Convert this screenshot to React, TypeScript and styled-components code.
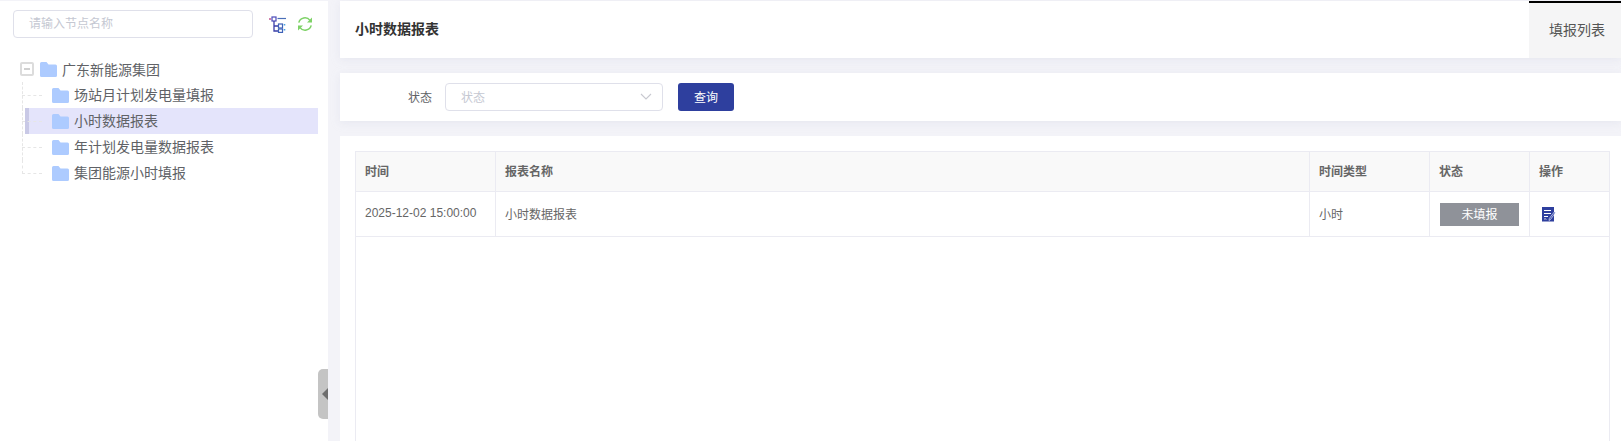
import styled, { createGlobalStyle } from "styled-components";

const GlobalStyle = createGlobalStyle`
  html, body {
    margin: 0;
    padding: 0;
    height: 100%;
    overflow: hidden;
    background: #f3f3f8;
  }
  * {
    box-sizing: border-box;
  }
  body {
    font-family: "Liberation Sans", "Noto Sans CJK SC", sans-serif;
  }
`;

const treeItems = ["场站月计划发电量填报", "小时数据报表", "年计划发电量数据报表", "集团能源小时填报"];

const FolderIcon = () => (
  <svg width="17" height="15" viewBox="0 0 17 15">
    <path d="M1.5 0h5l2 2.4h7a1.5 1.5 0 0 1 1.5 1.5v9.6a1.5 1.5 0 0 1-1.5 1.5h-14A1.5 1.5 0 0 1 0 13.500v-12A1.500 1.500 0 0 1 1.500 0z" fill="#adcbff" />
  </svg>
);

const App = () => {
  return (
    <>
      <GlobalStyle />
      <Page>
        <Sidebar>
          <SearchRow>
            <SearchInput>请输入节点名称</SearchInput>
            <IconButton>
              <svg width="18" height="17" viewBox="0 0 18 17" fill="none">
                <path d="M0 3h2" stroke="#c2568f" strokeWidth="1.4" />
                <rect x="3" y="1" width="4" height="4" stroke="#4a49b8" strokeWidth="1.2" />
                <path d="M8.5 2.500H17" stroke="#4a6fb8" strokeWidth="1.2" />
                <path d="M5 5v10h4M5 10h4" stroke="#3a3ea8" strokeWidth="1.3" />
                <rect x="9.500" y="8" width="4" height="4" stroke="#3f62b8" strokeWidth="1.2" />
                <rect x="9.500" y="13" width="4" height="3.400" stroke="#3f62b8" strokeWidth="1.2" />
                <path d="M15.500 8v1.500M15.500 13v1.500" stroke="#4aa3e0" strokeWidth="1.6" />
              </svg>
            </IconButton>
            <IconButton>
              <svg width="16" height="16" viewBox="0 0 16 16" fill="none">
                <path d="M1.800 6.600A6.300 6.300 0 0 1 13 4.400" stroke="#7ed267" strokeWidth="1.500" />
                <path d="M14.200 9.400A6.300 6.300 0 0 1 3 11.600" stroke="#7ed267" strokeWidth="1.500" />
                <path d="M15 1.400v5h-5z" fill="#7ed267" />
                <path d="M1 14.600v-5h5z" fill="#7ed267" />
              </svg>
            </IconButton>
          </SearchRow>
          <Tree>
            <RootRow>
              <Toggle />
              <FolderIcon />
              <NodeLabel>广东新能源集团</NodeLabel>
            </RootRow>
            <Branches>
              {treeItems.map((item, i) => (
                <TreeRow key={item} $active={i === 1} $last={i === treeItems.length - 1}>
                  <FolderIcon />
                  <BranchLabel>{item}</BranchLabel>
                </TreeRow>
              ))}
            </Branches>
          </Tree>
          <Collapse>
            <CollapseArrow />
          </Collapse>
        </Sidebar>
        <Main>
          <TitleBar>
            <Title>小时数据报表</Title>
            <Tab>填报列表</Tab>
          </TitleBar>
          <FilterBar>
            <FilterLabel>状态</FilterLabel>
            <Select>
              <span>状态</span>
              <svg width="12" height="7" viewBox="0 0 12 7" fill="none">
                <path d="M1 1l5 5 5-5" stroke="#c8c9d0" strokeWidth="1.1" />
              </svg>
            </Select>
            <QueryButton>查询</QueryButton>
          </FilterBar>
          <TableCard>
            <Table>
              <colgroup>
                <col style={{ width: 140 }} />
                <col />
                <col style={{ width: 120 }} />
                <col style={{ width: 100 }} />
                <col style={{ width: 80 }} />
              </colgroup>
              <thead>
                <tr>
                  <HeadCell>时间</HeadCell>
                  <HeadCell>报表名称</HeadCell>
                  <HeadCell>时间类型</HeadCell>
                  <HeadCell>状态</HeadCell>
                  <HeadCell>操作</HeadCell>
                </tr>
              </thead>
              <tbody>
                <tr>
                  <BodyCell>2025-12-02 15:00:00</BodyCell>
                  <BodyCell>小时数据报表</BodyCell>
                  <BodyCell>小时</BodyCell>
                  <BodyCell>
                    <StatusTag>未填报</StatusTag>
                  </BodyCell>
                  <BodyCell>
                    <EditIcon width="14" height="15" viewBox="0 0 14 15" fill="none">
                      <rect width="12" height="14.500" fill="#2e3f9e" />
                      <path d="M2 3.500h7M2 6.500h7M2 9.500h4" stroke="#fff" strokeWidth="1" />
                      <path d="M2 12.400c1-1.200 1.600-.4 2.400 0" stroke="#fff" strokeWidth=".8" />
                      <path d="M13.500 5.500l-5 7-1.500 1 .3-2 5-6.600z" fill="#3a4db0" stroke="#fff" strokeWidth=".6" />
                    </EditIcon>
                  </BodyCell>
                </tr>
              </tbody>
            </Table>
            <EmptyArea />
          </TableCard>
        </Main>
      </Page>
    </>
  );
};

export default App;

const Page = styled.div`
  display: flex;
  gap: 12px;
  height: 441px;
  padding-top: 1px;
  overflow: hidden;
`;

const Sidebar = styled.aside`
  position: relative;
  flex: none;
  width: 328px;
  background: #fff;
`;

const SearchRow = styled.div`
  display: flex;
  align-items: center;
  padding: 9px 0 0 13px;
`;

const SearchInput = styled.div`
  width: 240px;
  height: 28px;
  margin-right: 16px;
  padding-left: 15px;
  border: 1px solid #dfe0ea;
  border-radius: 4px;
  font-size: 12px;
  line-height: 26px;
  color: #c5c8d2;
`;

const IconButton = styled.span`
  display: flex;
  margin-right: 10px;
`;

const Tree = styled.div`
  padding: 18px 0 0 20px;
`;

const RootRow = styled.div`
  display: flex;
  align-items: center;
  height: 26px;
`;

const Toggle = styled.span`
  position: relative;
  width: 14px;
  height: 14px;
  margin-right: 6px;
  border: 2px solid #dcdcdc;
  border-radius: 2px;
  &::after {
    content: "";
    position: absolute;
    left: 2px;
    right: 2px;
    top: 4px;
    height: 2px;
    background: #d0d0d0;
  }
`;

const NodeLabel = styled.span`
  margin-left: 5px;
  font-size: 14px;
  color: #606266;
  white-space: nowrap;
`;

const BranchLabel = styled(NodeLabel)`
  margin-bottom: 2px;
`;

const Branches = styled.div`
  margin-left: 5px;
`;

const TreeRow = styled.div<{ $active: boolean; $last: boolean }>`
  position: relative;
  display: flex;
  align-items: center;
  width: 293px;
  height: 26px;
  padding-left: 23px;
  background: ${(props) => (props.$active ? "#e4e4fb" : "transparent")};
  border-left: 4px solid ${(props) => (props.$active ? "#c9c9e6" : "transparent")};
  &::before {
    content: "";
    position: absolute;
    left: -7px;
    top: 0;
    bottom: ${(props) => (props.$last ? "12px" : "0")};
    border-left: 1px dashed #e6e6e6;
  }
  &::after {
    content: "";
    position: absolute;
    left: -7px;
    top: 13px;
    width: 20px;
    border-top: 1px dashed #e6e6e6;
  }
`;

const Collapse = styled.div`
  position: absolute;
  right: 0;
  top: 368px;
  display: flex;
  align-items: center;
  justify-content: flex-end;
  width: 10px;
  height: 50px;
  background: #c4c4c4;
  border-radius: 5px 0 0 5px;
`;

const CollapseArrow = styled.span`
  border-style: solid;
  border-width: 6px 6px 6px 0;
  border-color: transparent #6e6e6e transparent transparent;
`;

const Main = styled.main`
  display: flex;
  flex: 1;
  flex-direction: column;
  gap: 15px;
  min-width: 0;
`;

const TitleBar = styled.header`
  display: flex;
  flex: none;
  align-items: stretch;
  justify-content: space-between;
  height: 57px;
  background: #fff;
  box-shadow: 0 2px 8px rgba(210, 212, 225, 0.35);
`;

const Title = styled.h1`
  margin: 0 0 0 15px;
  font-size: 14px;
  font-weight: 700;
  line-height: 57px;
  color: #333;
`;

const Tab = styled.div`
  width: 92px;
  padding-left: 4px;
  background: #f5f5f6;
  border-top: 2px solid #000;
  font-size: 14px;
  line-height: 55px;
  text-align: center;
  color: #555;
`;

const FilterBar = styled.div`
  display: flex;
  flex: none;
  align-items: center;
  height: 48px;
  padding-left: 68px;
  background: #fff;
  box-shadow: 0 2px 8px rgba(210, 212, 225, 0.35);
`;

const FilterLabel = styled.label`
  width: 24px;
  margin-right: 13px;
  padding-bottom: 1px;
  font-size: 12px;
  white-space: nowrap;
  color: #606266;
`;

const Select = styled.div`
  display: flex;
  align-items: center;
  justify-content: space-between;
  width: 218px;
  height: 28px;
  margin-right: 15px;
  padding: 0 10px 1px 15px;
  border: 1px solid #dfe0ea;
  border-radius: 4px;
  font-size: 12px;
  color: #c5c8d2;
`;

const QueryButton = styled.button`
  width: 56px;
  height: 28px;
  padding: 0 0 1px;
  background: #2e3f9e;
  border: none;
  border-radius: 3px;
  font-family: inherit;
  font-size: 12px;
  color: #fff;
`;

const TableCard = styled.section`
  flex: 1;
  padding: 15px 11px 0 15px;
  background: #fff;
`;

const Table = styled.table`
  width: 100%;
  table-layout: fixed;
  border-collapse: collapse;
`;

const HeadCell = styled.th`
  height: 40px;
  padding: 0 9px 2px;
  background: #f9f9f9;
  border: 1px solid #ebebf2;
  font-size: 12px;
  font-weight: 700;
  text-align: left;
  color: #666;
`;

const BodyCell = styled.td`
  height: 45px;
  padding: 0 9px 2px;
  border: 1px solid #ebebf2;
  font-size: 12px;
  color: #666;
`;

const StatusTag = styled.div`
  width: 79px;
  height: 23px;
  margin: 2px 0 0 1px;
  background: #8f9299;
  font-size: 12px;
  line-height: 24px;
  text-align: center;
  color: #fff;
`;

const EditIcon = styled.svg`
  display: block;
  margin: 2px 0 0 3px;
`;

const EmptyArea = styled.div`
  height: 300px;
  border: 1px solid #ebebf2;
  border-top: none;
`;
